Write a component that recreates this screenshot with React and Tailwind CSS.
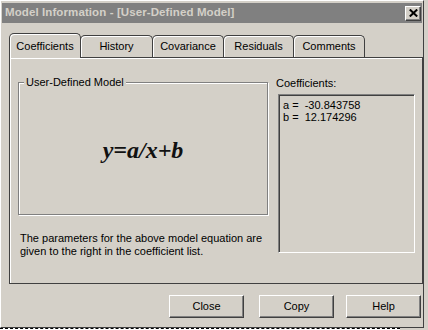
import React from 'react';

const tabs = [
  { id: 'coef', label: 'Coefficients', w: 'w-[72px]' },
  { id: 'hist', label: 'History', w: 'w-[73px]' },
  { id: 'cov', label: 'Covariance', w: 'w-[72px]' },
  { id: 'res', label: 'Residuals', w: 'w-[71px]' },
  { id: 'com', label: 'Comments', w: 'w-[72px]' },
];

const WinButton = ({ children, className = '' }) => (
  <button
    className={`h-[23px] w-[75px] bg-[#d4d0c8] border border-t-white border-l-white border-r-[#404040] border-b-[#404040] shadow-[inset_-1px_-1px_0_#808080] text-[11px] text-black ${className}`}
  >
    {children}
  </button>
);

export default function App() {
  const active = 'coef';

  return (
    <div
      className="w-[428px] h-[330px] bg-[#d4d0c8] overflow-hidden flex flex-col text-[11px] text-black"
      style={{ fontFamily: '"Liberation Sans", Arial, sans-serif' }}
    >
      <div className="w-[424px] h-[328px] flex flex-col border-t border-l border-white border-r border-r-[#404040] border-b border-b-[#404040] px-[1px] pt-[2px]">
        {/* title bar */}
        <div className="h-[20px] bg-[#808080] flex items-center justify-between pl-[3px] pr-[1px]">
          <span className="font-bold text-[11.5px] text-[#d4d0c8] tracking-[0.1px]">
            Model Information - [User-Defined Model]
          </span>
          <div className="w-[16px] h-[15px] bg-[#d4d0c8] border border-t-white border-l-white border-r-[#404040] border-b-[#404040] shadow-[inset_-1px_-1px_0_#808080] flex items-center justify-center">
            <svg width="9" height="8" viewBox="0 0 9 8">
              <path d="M0.8 0.5 L8.2 7.5 M8.2 0.5 L0.8 7.5" stroke="#000" strokeWidth="2" />
            </svg>
          </div>
        </div>

        {/* tabs */}
        <div className="flex items-end pl-[7px] mt-[10px] h-[24px]">
          {tabs.map((t) =>
            t.id === active ? (
              <div
                key={t.id}
                className={`${t.w} h-[25px] -mb-px relative z-10 bg-[#d4d0c8] border-t border-l border-r border-[#404040] rounded-t-[5px] shadow-[inset_1px_1px_0_#fff] flex items-start justify-center pt-[4px]`}
              >
                {t.label}
              </div>
            ) : (
              <div
                key={t.id}
                className={`${t.w} h-[22px] bg-[#d4d0c8] border-t border-l border-r border-[#404040] rounded-t-[5px] shadow-[inset_1px_1px_0_#fff] flex items-start justify-center pt-[2px] -ml-px`}
              >
                {t.label}
              </div>
            )
          )}
        </div>

        {/* panel */}
        <div className="ml-[7px] w-[414px] h-[227px] border border-[#404040] shadow-[inset_1px_1px_0_#fff] flex pl-[8px] pt-[24px]">
          <div className="w-[250px] flex flex-col">
            <div className="relative h-[133px] border border-[#808080] shadow-[1px_1px_0_#fff,inset_1px_1px_0_#fff] flex justify-center pt-[53px]">
              <span className="absolute -top-[8px] left-[5px] px-[2px] bg-[#d4d0c8] leading-[14px]">
                User-Defined Model
              </span>
              <span
                className="font-bold italic text-[24px] leading-[28px] text-[#111]"
                style={{ fontFamily: '"Liberation Serif", "Times New Roman", serif' }}
              >
                y=a/x+b
              </span>
            </div>
            <p className="mt-[17px] pl-[2px] leading-[13px]">
              The parameters for the above model equation are
              <br />
              given to the right in the coefficient list.
            </p>
          </div>

          <div className="ml-[8px] flex flex-col -mt-[6px]">
            <span className="leading-[14px]">Coefficients:</span>
            <div className="ml-[2px] mt-[4px] w-[137px] h-[159px] border border-t-[#808080] border-l-[#808080] border-r-white border-b-white shadow-[inset_1px_1px_0_#404040] pl-[4px] pt-[4px] leading-[12px]">
              <div className="whitespace-pre">a =  -30.843758</div>
              <div className="whitespace-pre">b =  12.174296</div>
            </div>
          </div>
        </div>

        {/* buttons */}
        <div className="flex mt-[11px] pl-[167px]">
          <WinButton>Close</WinButton>
          <WinButton className="ml-[15px]">Copy</WinButton>
          <WinButton className="ml-[12px]">Help</WinButton>
        </div>
      </div>
      <div className="h-[2px] w-[400px] bg-white border-t border-dashed border-black" />
    </div>
  );
}
